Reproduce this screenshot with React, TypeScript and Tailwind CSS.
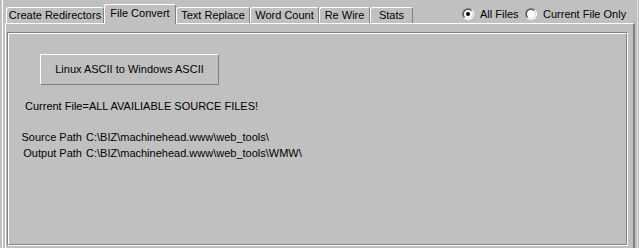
import React from "react";

function Radio({ checked }: { checked: boolean }) {
  return (
    <div className="w-[12px] h-[12px] rounded-full border border-t-[#808080] border-l-[#808080] border-b-white border-r-white flex items-center justify-center">
      <div className="w-[10px] h-[10px] rounded-full border border-t-[#404040] border-l-[#404040] border-b-[#dfdfdf] border-r-[#dfdfdf] bg-white flex items-center justify-center">
        {checked && <div className="w-[4px] h-[4px] rounded-full bg-black" />}
      </div>
    </div>
  );
}

function Tab({ label, w, selected }: { label: string; w: string; selected?: boolean }) {
  if (selected) {
    return (
      <div
        className={`${w} h-[20px] -mb-[1px] relative z-10 bg-[#c0c0c0] border-l border-t border-white border-r border-r-[#808080] rounded-t-[3px] flex justify-center pt-[2px] leading-[13px] whitespace-nowrap`}
      >
        {label}
      </div>
    );
  }
  return (
    <div
      className={`${w} h-[16px] border-l border-t border-white border-r border-r-[#808080] rounded-t-[3px] flex justify-center pt-[1px] leading-[13px] whitespace-nowrap`}
    >
      {label}
    </div>
  );
}

export default function App() {
  return (
    <div className="w-[639px] h-[248px] bg-[#c0c0c0] overflow-hidden pl-[2px] text-black text-[11px] font-['Liberation_Sans',Arial,sans-serif]">
      <div className="w-[636px] h-full border-l border-white border-r border-r-[#dfdfdf] flex flex-col">
        {/* tab row */}
        <div className="h-[23px] flex items-end pl-[3px] shrink-0">
          <Tab label="Create Redirectors" w="w-[98px]" />
          <Tab label="File Convert" w="w-[72px]" selected />
          <Tab label="Text Replace" w="w-[74px]" />
          <Tab label="Word Count" w="w-[69px]" />
          <Tab label="Re Wire" w="w-[51px]" />
          <Tab label="Stats" w="w-[43px]" />
          <div className="self-stretch flex items-center ml-[49px] pt-[5px] leading-[13px] whitespace-nowrap">
            <Radio checked />
            <span className="ml-[6px] w-[45px]">All Files</span>
            <Radio checked={false} />
            <span className="ml-[6px]">Current File Only</span>
          </div>
        </div>
        {/* tab page */}
        <div className="ml-[2px] w-[630px] flex-1 border-t border-l border-white border-r-2 border-r-[#808080] pt-[8px] pl-[1px] pr-[5px]">
          <div className="h-[214px] border-t border-l border-[#808080] border-r border-r-white border-b border-b-white">
            <div className="h-full border-t border-l border-white border-r border-r-[#808080] border-b border-b-[#808080] flex flex-col items-start leading-[13px]">
              <button className="ml-[31px] mt-[20px] w-[179px] h-[31px] border border-t-white border-l-white border-b-[#808080] border-r-[#808080] bg-[#c0c0c0] flex items-center justify-center whitespace-nowrap">
                Linux ASCII to Windows ASCII
              </button>
              <div className="ml-[16px] mt-[15px] whitespace-nowrap">Current File=ALL AVAILIABLE SOURCE FILES!</div>
              <div className="mt-[18px] ml-[9px] grid grid-cols-[64px_auto] gap-x-[4px] gap-y-[3px] whitespace-nowrap">
                <span className="text-right">Source Path</span>
                <span>C:\BIZ\machinehead.www\web_tools\</span>
                <span className="text-right">Output Path</span>
                <span>C:\BIZ\machinehead.www\web_tools\WMW\</span>
              </div>
            </div>
          </div>
        </div>
      </div>
    </div>
  );
}
